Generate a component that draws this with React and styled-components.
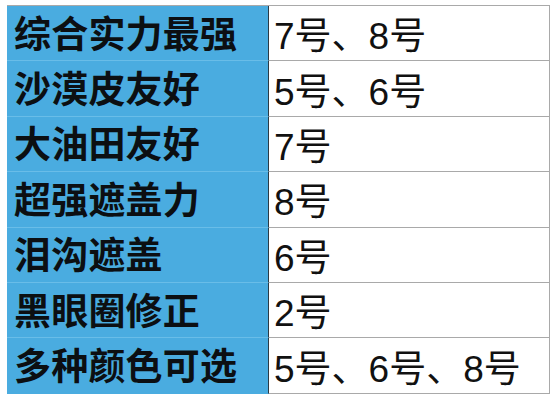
import React from 'react';
import styled, { createGlobalStyle } from 'styled-components';

const GlobalStyle = createGlobalStyle`
  html, body {
    margin: 0;
    padding: 0;
    background: #ffffff;
  }
  body {
    font-family: "Liberation Sans", "Noto Sans CJK SC", sans-serif;
  }
`;

const Page = styled.div`
  width: 560px;
  height: 406px;
  padding: 5px 0 0 7px;
  box-sizing: border-box;
`;

const Table = styled.div`
  display: grid;
  grid-template-columns: 262px 281px;
  width: 543px;
  border-top: 1px solid #a9a9a9;
`;

const Label = styled.div`
  height: 55.4px;
  box-sizing: border-box;
  display: flex;
  align-items: center;
  padding: 0 0 3px 7px;
  background: #4aace0;
  border-bottom: 1px solid ${(p) => (p.last ? '#4aace0' : '#69bde8')};
  border-right: 1.5px solid #2b3a44;
  font-family: "Noto Sans CJK SC", sans-serif;
  font-weight: 700;
  font-size: 37px;
  color: #0c0f12;
  letter-spacing: 0.2px;
`;

const Value = styled.div`
  height: 55.4px;
  box-sizing: border-box;
  display: flex;
  align-items: center;
  padding: 0 0 0 5px;
  background: #ffffff;
  border-bottom: 1px solid #a9a9a9;
  border-right: 1px solid #a9a9a9;
  font-family: "Liberation Sans", "Noto Sans CJK SC", sans-serif;
  font-size: 37px;
  color: #111111;
`;

const rows = [
  ['综合实力最强', '7号、8号'],
  ['沙漠皮友好', '5号、6号'],
  ['大油田友好', '7号'],
  ['超强遮盖力', '8号'],
  ['泪沟遮盖', '6号'],
  ['黑眼圈修正', '2号'],
  ['多种颜色可选', '5号、6号、8号'],
];

export default function App() {
  return (
    <>
      <GlobalStyle />
      <Page>
        <Table>
          {rows.map(([label, value], i) => (
            <React.Fragment key={label}>
              <Label last={i === rows.length - 1}>{label}</Label>
              <Value>{value}</Value>
            </React.Fragment>
          ))}
        </Table>
      </Page>
    </>
  );
}
